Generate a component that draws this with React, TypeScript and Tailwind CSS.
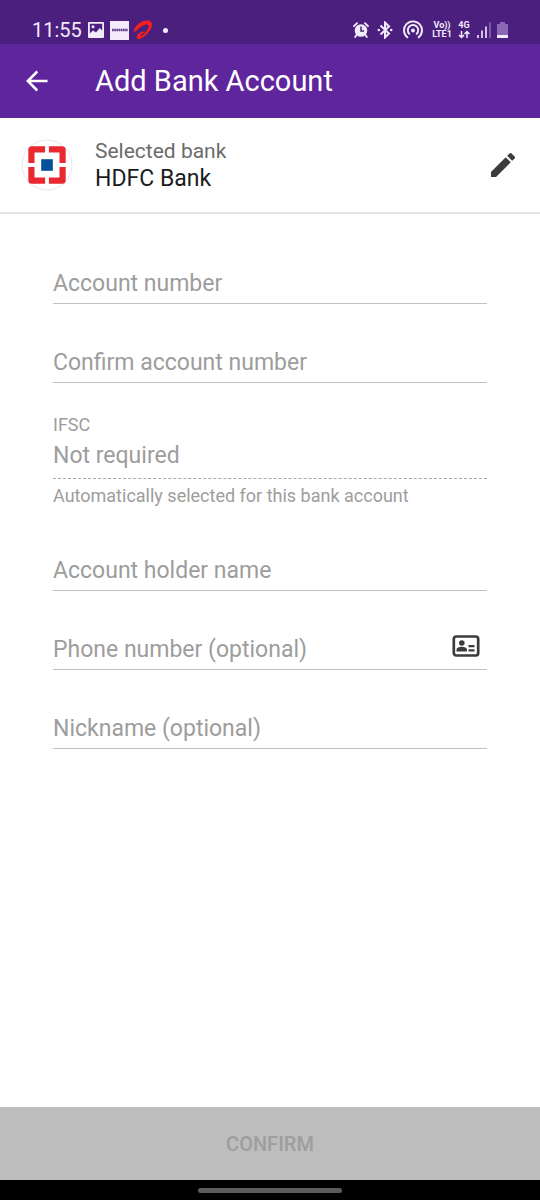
import type { ReactNode } from "react";

function StatusBar() {
  return (
    <div className="flex h-11 items-end justify-between bg-[#4b1f7e] pb-px pl-8 pr-8 text-[#f3ebfb]">
      <div className="flex items-center">
        <span className="w-[49px] text-xl leading-[26px]">11:55</span>
        <svg className="ml-[7px] h-4 w-4" viewBox="0 0 16 16" aria-hidden="true">
          <path
            fill="currentColor"
            fillRule="evenodd"
            d="M1 0h14a1 1 0 0 1 1 1v14a1 1 0 0 1-1 1H1a1 1 0 0 1-1-1V1a1 1 0 0 1 1-1ZM1.800 1.800v9.700L5 8.500l3 2 3.800-4.500 2.400 2.500V1.800ZM5 3.200a1.500 1.500 0 1 1 0 3 1.500 1.500 0 0 1 0-3Z"
          />
        </svg>
        <span className="ml-1.5 flex h-[19px] w-[19px] items-center justify-center bg-[#f3ebfb]">
          <svg className="h-1 w-4" viewBox="0 0 16 4" aria-hidden="true">
            <path d="M0 2H16" stroke="#5b3a86" strokeWidth="2.600" strokeDasharray="1.700 .5" />
          </svg>
        </span>
        <svg className="ml-1 h-5 w-5" viewBox="0 0 20 20" aria-hidden="true">
          <path
            fill="#f5201d"
            d="M.8 11.500C0 10.800 1 8.500 4 5.200C8 1.200 12.500 0 15.500.5C19.500 1.300 20 5.500 17.500 9.500C14.500 14.500 9.500 18.500 6 19C3.500 19.300 3 17 4.500 14.800C6 12.800 9 11.200 10.800 11.500C12 11.800 11.500 13 10 13.500C8 14.200 6.500 15.800 7.500 16C9.500 16.300 14 11 15.300 8C16.500 5 14.500 4 12 4.800C9 5.800 6 8 4 10C2.800 11.200 1.500 12 .8 11.500Z"
          />
        </svg>
        <span className="ml-2.5 h-[5px] w-[5px] rounded-full bg-[#f3ebfb]" />
      </div>

      <div className="flex h-[26px] items-center">
        <svg className="h-4 w-4" viewBox="0 0 16 16" aria-hidden="true">
          <circle cx="8" cy="8.500" r="6.300" fill="currentColor" />
          <path
            d="M1 4.200 4 1.200M15 4.200 12 1.200M3.500 13 2.200 15M12.500 13 13.800 15"
            stroke="currentColor"
            strokeWidth="1.900"
            strokeLinecap="round"
          />
          <path d="M8 4.500V9H11" fill="none" stroke="#4b1f7e" strokeWidth="1.500" />
        </svg>
        <svg className="ml-2 h-[18px] w-4" viewBox="0 0 16 18" aria-hidden="true">
          <path
            d="M3.500 4.500 12 12.500 8 16.500V1.500L12 5.500 3.500 13.500"
            fill="none"
            stroke="currentColor"
            strokeWidth="2"
          />
          <circle cx="1.800" cy="9" r="1.300" fill="currentColor" />
          <circle cx="14.200" cy="9" r="1.300" fill="currentColor" />
        </svg>
        <svg className="ml-2.5 h-5 w-5" viewBox="0 0 20 20" fill="none" aria-hidden="true">
          <path
            d="M4.300 17.300A9 9 0 1 1 15.700 17.300M6.300 13.800A5.200 5.200 0 1 1 13.700 13.800"
            stroke="currentColor"
            strokeWidth="1.900"
            strokeLinecap="round"
          />
          <circle cx="10" cy="10.500" r="2" fill="currentColor" />
        </svg>
        <span className="ml-2 flex w-[22px] flex-col items-center text-[9px] font-bold leading-[9px]">
          <span>Vo))</span>
          <span>LTE1</span>
        </span>
        <span className="ml-1 flex w-3.5 flex-col items-center text-[9px] font-bold leading-[9px]">
          <span>4G</span>
          <svg className="h-[9px] w-3" viewBox="0 0 12 9" aria-hidden="true">
            <path
              d="M3.500 1V7M1 5 3.500 7.500 6 5M9 8V2M6.500 4 9 1.500 11.500 4"
              fill="none"
              stroke="currentColor"
              strokeWidth="1.500"
            />
          </svg>
        </span>
        <svg className="ml-1.5 h-4 w-3.5" viewBox="0 0 14 16" aria-hidden="true">
          <path d="M1 13V16M5 8.500V16M9 4.500V16" stroke="currentColor" strokeWidth="1.600" />
          <path d="M13 .5V16" stroke="#8a68b3" strokeWidth="1.600" />
        </svg>
        <svg className="ml-1.5 h-4 w-[11px]" viewBox="0 0 11 16" aria-hidden="true">
          <path d="M3 0H8V2H11V16H0V2H3Z" fill="#8a68b3" />
          <path d="M0 13H11V16H0Z" fill="currentColor" />
        </svg>
      </div>
    </div>
  );
}

function BankLogo() {
  return (
    <svg className="h-[52px] w-[52px] shrink-0" viewBox="0 0 52 52" role="img" aria-label="HDFC Bank">
      <circle cx="26" cy="26" r="25" fill="#fff" stroke="#e8e8e8" />
      <rect x="7.300" y="7.300" width="37.400" height="37.400" rx="3.500" fill="#ea2830" />
      <rect x="13.500" y="13.500" width="25" height="25" fill="#fff" />
      <path d="M26 7V45M7 26H45" stroke="#fff" strokeWidth="3.800" />
      <rect x="20.200" y="20.200" width="11.600" height="11.600" fill="#04509b" />
    </svg>
  );
}

type FieldProps = { id: string; label: string; type?: string; children?: ReactNode };

function Field({ id, label, type = "text", children }: FieldProps) {
  return (
    <div className="flex h-10 items-start border-b border-[#c2c2c2]">
      <input
        id={id}
        type={type}
        aria-label={label}
        placeholder={label}
        className="h-[38px] min-w-0 flex-1 bg-transparent text-[23px] text-[#212121] outline-none placeholder:text-[#9d9d9d]"
      />
      {children}
    </div>
  );
}

export default function App() {
  return (
    <div className="flex min-h-screen flex-col bg-white font-[Roboto,sans-serif]">
      <StatusBar />
      <header className="flex h-[74px] items-center bg-[#5f259c] pl-[26px] text-white">
        <button type="button" aria-label="Back" className="h-[22px] w-[22px]">
          <svg className="h-[22px] w-[22px]" viewBox="0 0 22 22" fill="none" aria-hidden="true">
            <path d="M21.500 11H2M11.300 1.500 1.800 11 11.300 20.500" stroke="currentColor" strokeWidth="2.500" />
          </svg>
        </button>
        <h1 className="ml-[47px] text-[29px] leading-9">Add Bank Account</h1>
      </header>

      <section className="flex h-24 items-center border-b-2 border-[#e2e2e2] pl-[21px] pr-[25px]">
        <BankLogo />
        <div className="ml-[22px] flex-1">
          <p className="text-[21px] leading-7 text-[#6b6b6b]">Selected bank</p>
          <p className="text-[23px] leading-7 text-[#1c1c1c]">HDFC Bank</p>
        </div>
        <button type="button" aria-label="Edit bank" className="h-6 w-6">
          <svg className="h-6 w-6" viewBox="3 3 18 18" aria-hidden="true">
            <path
              fill="#3c3c3c"
              d="M3 17.250V21h3.750L17.810 9.940l-3.750-3.750L3 17.250zM20.710 7.040a1 1 0 0 0 0-1.410l-2.340-2.340a1 1 0 0 0-1.410 0l-1.830 1.830 3.750 3.750 1.830-1.830z"
            />
          </svg>
        </button>
      </section>

      <form id="account" className="flex flex-1 flex-col px-[53px] pt-[50px]">
        <div className="flex flex-col gap-[39px]">
          <Field id="number" label="Account number" />
          <Field id="confirm" label="Confirm account number" />
        </div>
        <div className="mt-7 text-[#9d9d9d]">
          <label htmlFor="ifsc" className="block text-lg leading-7">
            IFSC
          </label>
          <input
            id="ifsc"
            readOnly
            value="Not required"
            className="block h-10 w-full border-b border-dashed border-[#a8a8a8] bg-transparent pb-1.5 text-[23px] outline-none"
          />
          <p className="mt-[5px] text-lg leading-6">Automatically selected for this bank account</p>
        </div>
        <div className="mt-[43px] flex flex-col gap-[39px]">
          <Field id="holder" label="Account holder name" />
          <Field id="phone" label="Phone number (optional)" type="tel">
            <button type="button" aria-label="Choose contact" className="mr-[7px] mt-[5px] h-[22px] w-7">
              <svg className="h-[22px] w-7" viewBox="0 0 28 22" aria-hidden="true">
                <rect x="1.800" y="1.500" width="24.400" height="19" rx="2.500" fill="none" stroke="#3c3c3c" strokeWidth="2.700" />
                <circle cx="9.800" cy="8" r="2.800" fill="#3c3c3c" />
                <path
                  fill="#3c3c3c"
                  d="M4.500 16.500V14.700C4.500 12.800 7.200 11.800 9.800 11.800S15 12.800 15 14.700V16.500ZM16.500 10H22.500V12.300H16.500ZM16.500 14.200H22.500V16.500H16.500Z"
                />
              </svg>
            </button>
          </Field>
          <Field id="nickname" label="Nickname (optional)" />
        </div>
      </form>

      <button
        type="submit"
        form="account"
        disabled
        className="h-[73px] w-full bg-[#bdbdbd] text-xl font-medium text-[#9e9e9e]"
      >
        CONFIRM
      </button>
      <div className="flex h-5 items-center justify-center bg-black">
        <span className="h-[5px] w-36 rounded-full bg-[#5c5c5c]" />
      </div>
    </div>
  );
}
